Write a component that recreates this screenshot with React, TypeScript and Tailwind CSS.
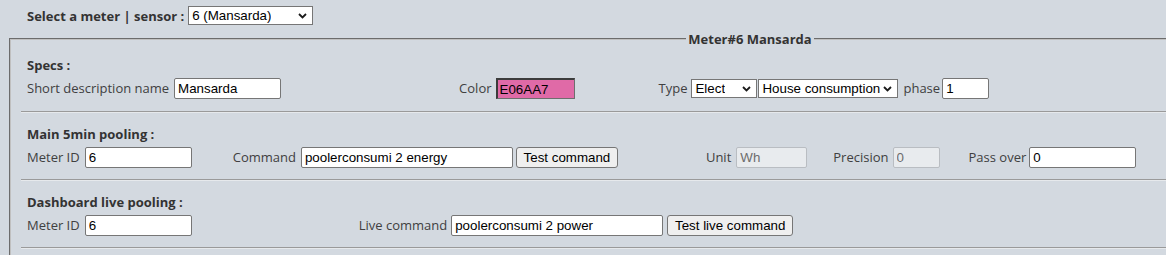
import React from "react";

const arial = "font-['Liberation_Sans',Arial,sans-serif] text-[13.333px] leading-[15px]";

function TextInput({ value, w, className = "" }: { value: string; w: string; className?: string }) {
  return (
    <input
      readOnly
      value={value}
      className={`h-[21px] ${w} shrink-0 border border-[#767676] rounded-[2px] bg-white pl-[3px] text-black ${arial} outline-none ${className}`}
    />
  );
}

function DisabledInput({ value, w, className = "" }: { value: string; w: string; className?: string }) {
  return (
    <input
      disabled
      readOnly
      value={value}
      className={`h-[21px] ${w} shrink-0 border border-[#b9bdc2] rounded-[2px] bg-[#e8ebee] pl-[3px] text-[#6d6d6d] ${arial} outline-none ${className}`}
    />
  );
}

function Chevron() {
  return (
    <svg width="9" height="6" viewBox="0 0 9 6" className="shrink-0">
      <path d="M1 1 L4.5 4.5 L8 1" fill="none" stroke="#1a1a1a" strokeWidth="1.8" />
    </svg>
  );
}

function Select({ value, w, className = "" }: { value: string; w: string; className?: string }) {
  return (
    <div
      className={`h-[19px] ${w} shrink-0 flex items-center justify-between border border-[#767676] bg-white pl-[3px] pr-[5px] text-black ${arial} ${className}`}
    >
      <span className="whitespace-nowrap overflow-hidden">{value}</span>
      <Chevron />
    </div>
  );
}

function Button({ label, w, className = "" }: { label: string; w: string; className?: string }) {
  return (
    <button
      className={`h-[21px] ${w} shrink-0 border border-[#767676] rounded-[3px] bg-[#efefef] text-black ${arial} whitespace-nowrap ${className}`}
    >
      {label}
    </button>
  );
}

function Label({ children, className = "" }: { children: React.ReactNode; className?: string }) {
  return <span className={`whitespace-nowrap shrink-0 ${className}`}>{children}</span>;
}

function Hr() {
  return <div className="h-[2px] border-t border-t-[#9a9a9a] border-b border-b-[#e6e9ec]" />;
}

function Title({ children }: { children: React.ReactNode }) {
  return <div className="pl-[6px] h-[18px] font-bold text-[#333]">{children}</div>;
}

export default function App() {
  return (
    <div className="w-[1166px] h-[255px] overflow-hidden bg-[#d3d9e0] text-[13px] leading-[18px] text-[#404040] font-['Open_Sans',sans-serif]">
      <div className="flex items-center pl-[27px] pt-[6px] h-[25px]">
        <span className="font-bold text-[#333] whitespace-nowrap">Select a meter | sensor :</span>
        <Select value="6 (Mansarda)" w="w-[125px]" className="ml-[4px]" />
      </div>

      <fieldset className="ml-[9px] mt-[5px] w-[1482px] min-w-0 border-2 [border-style:groove] border-[#c0c0c0] px-[10px] pb-[40px]">
        {/* @ts-ignore */}
        <legend align="center" className="mx-auto px-[2px] font-bold text-[#333] leading-[18px]">
          Meter#6 Mansarda
        </legend>

        <div className="pt-[8px]">
          <Title>Specs :</Title>
          <div className="mt-[4px] h-[21px] flex items-center pl-[6px]">
            <Label className="-mt-[1px]">Short description name</Label>
            <TextInput value="Mansarda" w="w-[107px]" className="ml-[5px]" />
            <Label className="ml-[178px] -mt-[1px]">Color</Label>
            <input
              readOnly
              value="E06AA7"
              className={`ml-[4px] h-[21px] w-[79px] shrink-0 border-t-2 border-l-2 border-r border-b border-t-[#3c3c3c] border-l-[#3c3c3c] border-r-[#6e6e6e] border-b-[#6e6e6e] bg-[#E06AA7] pl-[2px] text-black ${arial} outline-none`}
            />
            <Label className="ml-[84px] -mt-[1px]">Type</Label>
            <Select value="Elect" w="w-[66px]" className="ml-[4px]" />
            <Select value="House consumption" w="w-[140px]" className="ml-[1px]" />
            <Label className="ml-[5px] -mt-[1px]">phase</Label>
            <TextInput value="1" w="w-[47px]" className="ml-[2px]" />
          </div>
        </div>

        <div className="mt-[12px]">
          <Hr />
        </div>

        <div className="mt-[12px]">
          <Title>Main 5min pooling :</Title>
          <div className="mt-[4px] h-[21px] flex items-center pl-[6px]">
            <Label className="-mt-[1px]">Meter ID</Label>
            <TextInput value="6" w="w-[107px]" className="ml-[5px]" />
            <Label className="ml-[41px] -mt-[1px]">Command</Label>
            <TextInput value="poolerconsumi 2 energy" w="w-[212px]" className="ml-[5px]" />
            <Button label="Test command" w="w-[102px]" className="ml-[3px]" />
            <Label className="ml-[88px] -mt-[1px]">Unit</Label>
            <DisabledInput value="Wh" w="w-[71px]" className="ml-[5px]" />
            <Label className="ml-[26px] -mt-[1px]">Precision</Label>
            <DisabledInput value="0" w="w-[47px]" className="ml-[4px]" />
            <Label className="ml-[29px] -mt-[1px]">Pass over</Label>
            <TextInput value="0" w="w-[107px]" className="ml-[3px]" />
          </div>
        </div>

        <div className="mt-[11px]">
          <Hr />
        </div>

        <div className="mt-[12px]">
          <Title>Dashboard live pooling :</Title>
          <div className="mt-[4px] h-[21px] flex items-center pl-[6px]">
            <Label className="-mt-[1px]">Meter ID</Label>
            <TextInput value="6" w="w-[107px]" className="ml-[5px]" />
            <Label className="ml-[167px] -mt-[1px]">Live command</Label>
            <TextInput value="poolerconsumi 2 power" w="w-[212px]" className="ml-[4px]" />
            <Button label="Test live command" w="w-[126px]" className="ml-[4px]" />
          </div>
        </div>

        <div className="mt-[11px]">
          <Hr />
        </div>
      </fieldset>
    </div>
  );
}
